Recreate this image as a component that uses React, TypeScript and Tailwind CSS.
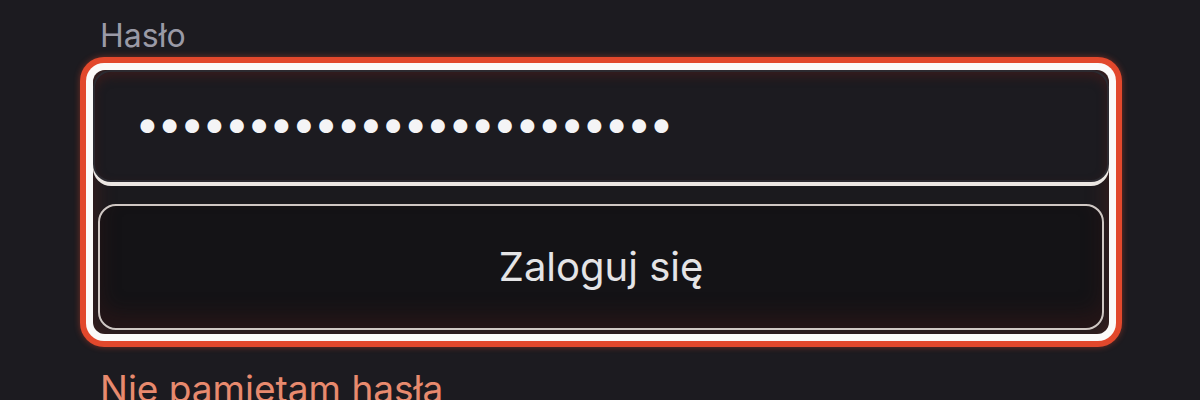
import React from 'react';

export default function App() {
  return (
    <div className="h-[400px] w-[1200px] overflow-hidden bg-[#1c1b20] pl-[80px] pt-[20px] font-['Inter',sans-serif]">
      <div className="w-[1042px]">
        <label className="block pl-[20px] text-[32px] leading-none text-[#9a9aa6]">Hasło</label>

        <div className="mt-[5px] rounded-[24px] bg-[#e2482c] p-[6px] shadow-[0_0_6px_rgba(226,72,44,0.45)]">
          <div className="rounded-[18px] bg-[#fbfaf9] p-[7px]">
            <div className="flex flex-col rounded-[12px] bg-[#1b1a1e] pb-[4px] shadow-[inset_0_0_22px_rgba(110,40,32,0.45)]">
              <input
                type="password"
                readOnly
                value="abcdefghijklmnopqrstuvwx"
                className="h-[112px] w-full rounded-[18px] border-2 border-[#2c2a30] bg-[#1c1b20] pb-[6px] pl-[40px] text-[44px] tracking-[-2.4px] text-[#f4f4f6] shadow-[0_4px_0_#ece7e3,inset_0_5px_10px_rgba(70,28,26,0.6)] outline-none"
              />
              <button className="mx-[5px] mt-[22px] h-[126px] rounded-[18px] border-2 border-[#cfc7c3] bg-[#141316] text-[40px] text-[#e4e4e6] shadow-[inset_0_-14px_20px_rgba(70,25,25,0.35)]">
                Zaloguj się
              </button>
            </div>
          </div>
        </div>

        <a className="mt-[23px] block pl-[20px] text-[37px] leading-none text-[#e88a6e]">Nie pamiętam hasła</a>
      </div>
    </div>
  );
}
